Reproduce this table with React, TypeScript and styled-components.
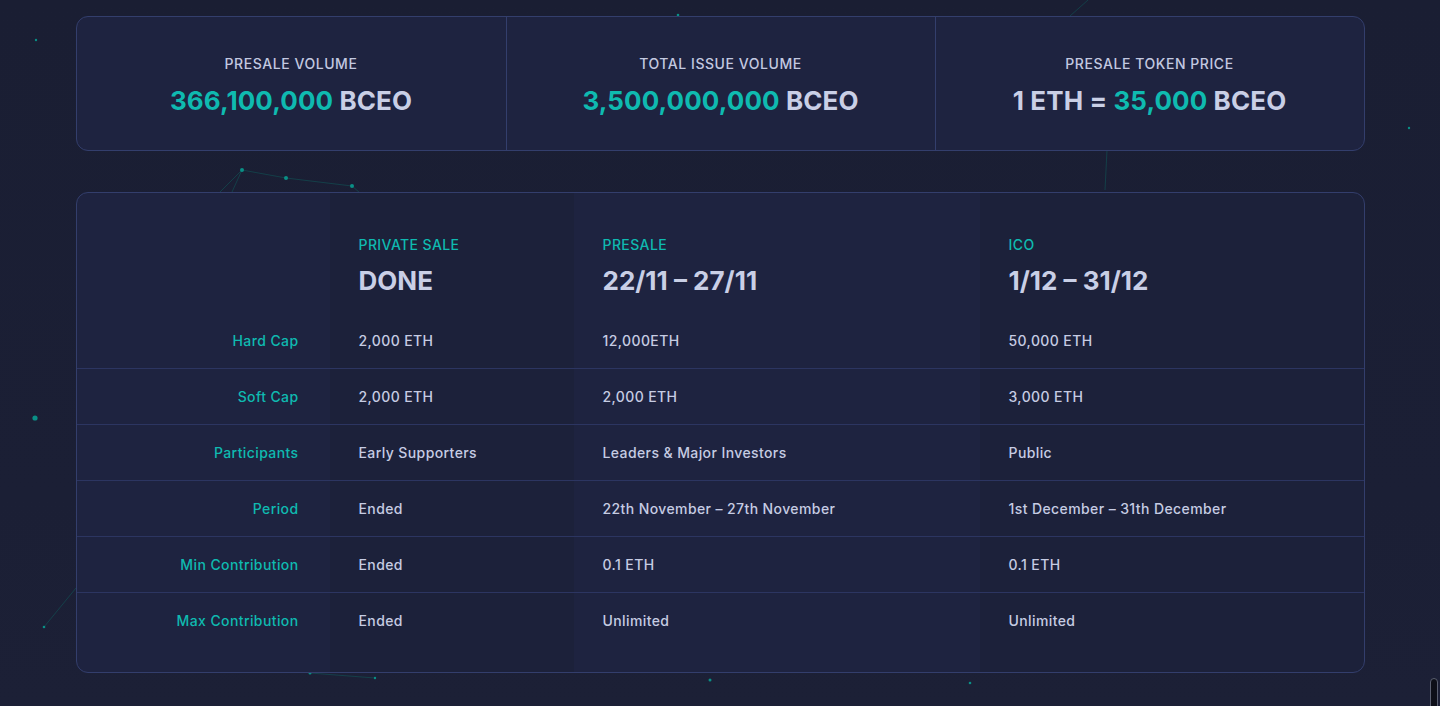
import React from "react";
import styled, { createGlobalStyle } from "styled-components";

const Global = createGlobalStyle`
  html, body { margin: 0; padding: 0; height: 100%; overflow: hidden; }
  body {
    background: linear-gradient(180deg, #1a1e33 0%, #1b1f35 70%, #1c2036 100%);
    font-family: "Inter", "Open Sans", sans-serif;
    color: #c6cce3;
    -webkit-font-smoothing: antialiased;
  }
`;

const Page = styled.div`
  position: relative;
  min-height: 706px;
  padding-top: 16px;
  box-sizing: border-box;
`;

const Backdrop = styled.svg`
  position: absolute;
  inset: 0;
  width: 1440px;
  height: 706px;
  pointer-events: none;
  z-index: 0;
`;

const Container = styled.div`
  position: relative;
  z-index: 1;
  width: 1289px;
  margin: 0 auto;
  display: flex;
  flex-direction: column;
  gap: 41px;
`;

const StatsCard = styled.div`
  display: grid;
  grid-template-columns: repeat(3, 1fr);
  background: #1e2340;
  border: 1px solid #333e6c;
  border-radius: 12px;
  height: 135px;
  box-sizing: border-box;
`;

const Stat = styled.div<{ $divider?: boolean }>`
  display: flex;
  flex-direction: column;
  align-items: center;
  padding-top: 37px;
  gap: 11px;
  border-left: ${(p) => (p.$divider ? "1px solid #333e6c" : "none")};
`;

const StatLabel = styled.div`
  font-size: 14px;
  line-height: 20px;
  font-weight: 500;
  letter-spacing: 0.55px;
  color: #c3c9e0;
  text-transform: uppercase;
`;

const StatValue = styled.div`
  font-size: 26px;
  line-height: 32px;
  font-weight: 700;
  color: #c9cfe6;
  letter-spacing: 0.1px;
`;

const Accent = styled.span`
  color: #0fbab0;
`;

const TableCard = styled.div`
  border: 1px solid #333e6c;
  border-radius: 12px;
  overflow: hidden;
  background: linear-gradient(
    to right,
    #1e2340 0 253px,
    #1c213a 253px 497px,
    #1e2340 497px 903px,
    #1c213a 903px
  );
  padding-bottom: 24px;
`;

const Row = styled.div<{ $head?: boolean; $divider?: boolean }>`
  display: grid;
  grid-template-columns: 253px 244px 406px 1fr;
  height: ${(p) => (p.$head ? "119px" : "56px")};
  border-top: ${(p) => (p.$divider ? "1px solid #2c3561" : "none")};
  box-sizing: border-box;
`;

const LabelCell = styled.div`
  display: flex;
  align-items: center;
  justify-content: flex-end;
  padding-right: 31px;
  font-size: 14px;
  font-weight: 500;
  letter-spacing: 0.4px;
  color: #0fbab0;
`;

const Cell = styled.div`
  display: flex;
  align-items: center;
  padding-left: 29px;
  font-size: 14px;
  font-weight: 500;
  letter-spacing: 0.4px;
  color: #c6cce3;
`;

const HeadCell = styled.div`
  display: flex;
  flex-direction: column;
  justify-content: flex-end;
  padding-left: 29px;
  padding-bottom: 15px;
  gap: 11px;
`;

const Phase = styled.div`
  font-size: 14px;
  line-height: 18px;
  font-weight: 500;
  letter-spacing: 0.4px;
  color: #0fbab0;
  text-transform: uppercase;
`;

const PhaseDate = styled.div`
  font-size: 26px;
  line-height: 32px;
  font-weight: 700;
  color: #c9cfe6;
`;

const ScrollThumb = styled.div`
  position: absolute;
  right: 2px;
  bottom: -4px;
  width: 6px;
  height: 30px;
  border-radius: 4px;
  background: #0d0f18;
  border: 1px solid #5a5f70;
  z-index: 2;
`;

const phases = [
  { name: "Private Sale", date: "DONE" },
  { name: "Presale", date: "22/11 – 27/11" },
  { name: "ICO", date: "1/12 – 31/12" },
];

const rows: [string, string, string, string][] = [
  ["Hard Cap", "2,000 ETH", "12,000ETH", "50,000 ETH"],
  ["Soft Cap", "2,000 ETH", "2,000 ETH", "3,000 ETH"],
  ["Participants", "Early Supporters", "Leaders & Major Investors", "Public"],
  ["Period", "Ended", "22th November – 27th November", "1st December – 31th December"],
  ["Min Contribution", "Ended", "0.1 ETH", "0.1 ETH"],
  ["Max Contribution", "Ended", "Unlimited", "Unlimited"],
];

const dots: [number, number, number][] = [
  [36, 40, 1.2],
  [242, 170, 2],
  [286, 178, 2],
  [352, 186, 2],
  [35, 418, 2.6],
  [44, 627, 1.3],
  [1409, 128, 1.2],
  [678, 15, 1.3],
  [310, 673, 1.5],
  [375, 678, 1.2],
  [710, 680, 1.5],
  [970, 683, 1.3],
];

const lines: [number, number, number, number][] = [
  [242, 170, 286, 178],
  [286, 178, 352, 186],
  [352, 186, 360, 193],
  [242, 170, 220, 192],
  [242, 170, 232, 192],
  [44, 627, 76, 588],
  [1088, 0, 1070, 16],
  [1107, 150, 1105, 190],
  [310, 673, 375, 678],
];

export default function App() {
  return (
    <>
      <Global />
      <Page>
        <Backdrop viewBox="0 0 1440 706">
          {lines.map(([x1, y1, x2, y2], i) => (
            <line key={i} x1={x1} y1={y1} x2={x2} y2={y2} stroke="#0f5a5a" strokeOpacity={0.55} strokeWidth={1} />
          ))}
          {dots.map(([cx, cy, r], i) => (
            <circle key={i} cx={cx} cy={cy} r={r} fill="#0a8f86" />
          ))}
        </Backdrop>
        <Container>
          <StatsCard>
            <Stat>
              <StatLabel>Presale Volume</StatLabel>
              <StatValue>
                <Accent>366,100,000</Accent> BCEO
              </StatValue>
            </Stat>
            <Stat $divider>
              <StatLabel>Total Issue Volume</StatLabel>
              <StatValue>
                <Accent>3,500,000,000</Accent> BCEO
              </StatValue>
            </Stat>
            <Stat $divider>
              <StatLabel>Presale Token Price</StatLabel>
              <StatValue>
                1 ETH = <Accent>35,000</Accent> BCEO
              </StatValue>
            </Stat>
          </StatsCard>

          <TableCard>
            <Row $head>
              <div />
              {phases.map((p) => (
                <HeadCell key={p.name}>
                  <Phase>{p.name}</Phase>
                  <PhaseDate>{p.date}</PhaseDate>
                </HeadCell>
              ))}
            </Row>
            {rows.map((r, i) => (
              <Row key={r[0]} $divider={i > 0}>
                <LabelCell>{r[0]}</LabelCell>
                <Cell>{r[1]}</Cell>
                <Cell>{r[2]}</Cell>
                <Cell>{r[3]}</Cell>
              </Row>
            ))}
          </TableCard>
        </Container>
        <ScrollThumb />
      </Page>
    </>
  );
}
